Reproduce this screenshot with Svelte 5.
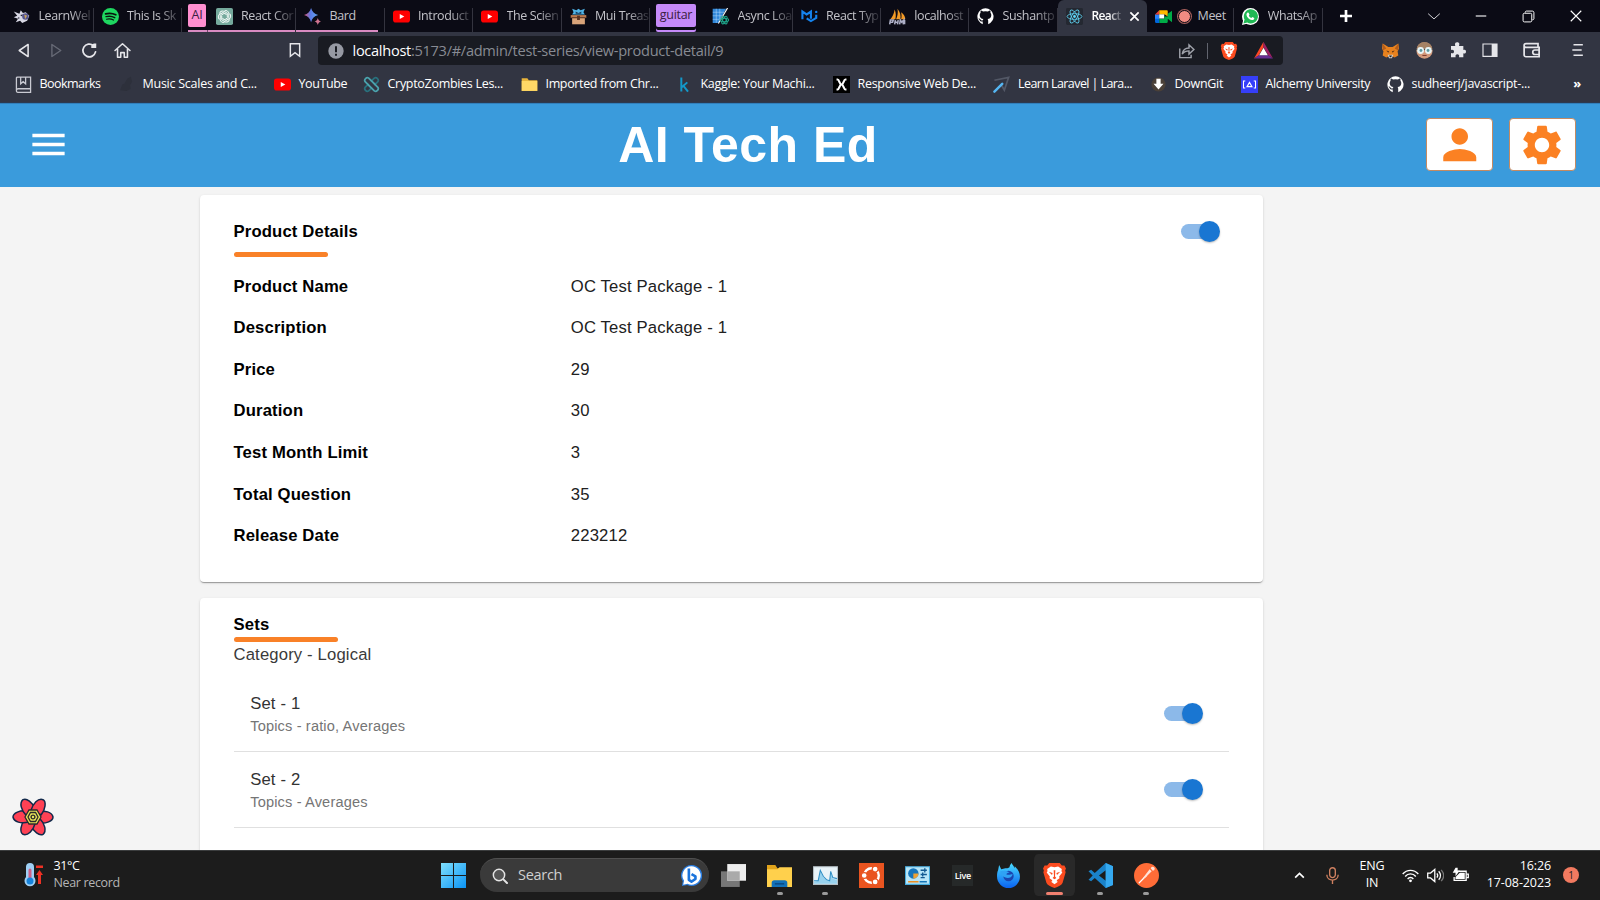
<script>
  const cat = '<path fill="#fff" fill-rule="evenodd" d="M12 .5a11.5 11.5 0 0 0-3.9 22.3V19c-3 .6-4-1-4.600-2.200C3 15.600 2.500 15.600 2 15c1.500-.6 2.500.6 3.200 1.700.8 1.300 2 1 3 .6.1-.8.500-1.300.9-1.600-3-.4-5.300-1.700-5.300-5.700 0-1.300.500-2.500 1.300-3.300-.2-.9-.2-2 .2-3 1 0 2.200.6 3.200 1.300a11 11 0 0 1 7 0c1-.7 2.200-1.300 3.200-1.300.4 1 .4 2.100.2 3 .8.8 1.300 2 1.300 3.300 0 4-2.300 5.300-5.300 5.700.6.500.9 1.300.9 2.500v4.600A11.500 11.500 0 0 0 12 .5z"/>';
  const lion = '<path fill="#fb4b1f" d="M12 0h5l2 2.500 2.500-.2 1.500 3-.8 2 .5 1.500-3 10.500c-.8 2-4 3.500-7.700 4.700C8.300 22.800 5.100 21.300 4.300 19.300L1.300 8.800l.5-1.500-.8-2 1.500-3 2.500.2L7 0z"/><path fill="#fff" d="M12 4l3.500-.7 3.500 2.400-.3 2.100.8 1.200-3 3.900.3 1.800-2.400 1.500-.3 1.200 1.200.7L12 20.500l-3.300-2.400 1.200-.7-.3-1.200-2.400-1.500.3-1.800-3-3.900.8-1.200L5 5.700l3.500-2.400z"/><path fill="#fb4b1f" d="M6.500 8.500l3.700 1-.6 2zM17.500 8.500l-3.700 1 .6 2zM11.200 7h1.600l-.3 6 1.300 1.300L12 15.500l-1.800-1.200 1.300-1.300z"/>';
  const yt = '<rect y="3.500" width="24" height="17" rx="4" fill="#f00"/><path fill="#fff" d="M9.500 8.300l6.500 3.700-6.500 3.700z"/>';
  const art = {
    bee: '<path fill="#d8d8e4" d="M1 5l8 3 2-5 3 4 4-1 5 5-3 7-7 3-3-3-6 2 3-5-6-2 5-2z"/><path fill="#17162b" d="M10 10l4-1-1 3zM7 13l3 1-3 1z"/><circle cx="17.500" cy="12" r="4.500" fill="#55558f"/><path fill="#caa45e" d="M16 9l4 2-3 5z"/>',
    spotify: '<circle cx="12" cy="12" r="12" fill="#1ed760"/><g fill="none" stroke="#08150c" stroke-linecap="round"><path stroke-width="2.400" d="M5 8.300c5-1.400 10-1 14.500 1.400"/><path stroke-width="2" d="M5.700 12.200c4.400-1.200 8.600-.7 12.300 1.400"/><path stroke-width="1.600" d="M6.300 15.800c3.700-.9 7-.5 10 1.200"/></g>',
    gpt: '<rect width="24" height="24" rx="2.500" fill="#75a99c"/><g fill="none" stroke="#f4faf8" stroke-width="1.400"><path d="M12 4a4.200 4.200 0 0 1 6 4v5l-5 3"/><path d="M12 4a4.200 4.200 0 0 1 6 4v5l-5 3" transform="rotate(60 12 12)"/><path d="M12 4a4.200 4.200 0 0 1 6 4v5l-5 3" transform="rotate(120 12 12)"/><path d="M12 4a4.200 4.200 0 0 1 6 4v5l-5 3" transform="rotate(180 12 12)"/><path d="M12 4a4.200 4.200 0 0 1 6 4v5l-5 3" transform="rotate(240 12 12)"/><path d="M12 4a4.200 4.200 0 0 1 6 4v5l-5 3" transform="rotate(300 12 12)"/></g>',
    bard: '<defs><linearGradient id="bd"><stop stop-color="#e05573"/><stop offset=".45" stop-color="#5c7be6"/><stop offset="1" stop-color="#62a5f0"/></linearGradient></defs><path fill="url(#bd)" d="M10 0c1.500 5.500 4.500 8.500 10 10-5.500 1.500-8.500 4.500-10 10-1.500-5.500-4.500-8.500-10-10C5.500 8.500 8.500 5.500 10 0z"/><path fill="#cf7390" d="M19.500 14c.7 2.700 1.800 4 4.500 5-2.700.7-3.800 2.300-4.500 5-.7-2.700-1.800-4.300-4.500-5 2.700-1 3.800-2.300 4.500-5z"/>',
    yt,
    chest: '<path fill="#4fb3e6" d="M3 1l6 2 3-2 3 2 6-2-2 5 2 3H3l2-3z"/><path fill="#173a5c" d="M8 5l4 2 4-2v3H8z"/><path fill="#b97a50" d="M1 10h22v4H1z"/><path fill="#d9a47a" d="M3 14h18v9H3z"/><path fill="#5a3422" d="M10 11h4v6h-4zM2 13h20v1.500H2z"/>',
    async: '<path fill="#3187d8" d="M1 1h19L9 21H1z"/><path stroke="#b8dcff" stroke-width=".7" d="M1 6h16M1 11h13M1 16h10M6 1v20M11 1v15"/><path stroke="#fff" stroke-width="1.600" d="M22 0L9 22"/><g fill="none" stroke="#1fa58a" stroke-width="1.500"><ellipse cx="17.500" cy="17" rx="6" ry="2.500"/><ellipse cx="17.500" cy="17" rx="6" ry="2.500" transform="rotate(60 17.500 17)"/><ellipse cx="17.500" cy="17" rx="6" ry="2.500" transform="rotate(120 17.500 17)"/></g>',
    mui: '<path fill="none" stroke="#1583ee" stroke-width="3" d="M2 16V5l6 4 6-4v10M8 14.500l6 4 7.500-4.500V9.500"/><circle cx="21.500" cy="5.500" r="1.700" fill="#1583ee"/>',
    pma: '<path fill="#f39a25" d="M2 16C5 12 7 8 8 2c2 5 2 9 1 14zM10 16c2-4 3-9 2-15 4 5 5 10 4 15zM17 16c1-3 1-7 0-10 4 3 6 6 6 10z"/><path stroke="#adafc6" stroke-width="2.200" fill="none" d="M1 23l1-6h4l-1 3H2M8 23l1-6M8.500 20h4M13 17l-1 6M15 23l1-6 2 3 3-3-1 6M22 17v6"/>',
    cat,
    react: '<rect width="24" height="24" rx="2" fill="#242831"/><g fill="none" stroke="#61dafb" stroke-width="1.100"><ellipse cx="12" cy="12" rx="10.500" ry="4"/><ellipse cx="12" cy="12" rx="10.500" ry="4" transform="rotate(60 12 12)"/><ellipse cx="12" cy="12" rx="10.500" ry="4" transform="rotate(120 12 12)"/></g><circle cx="12" cy="12" r="2" fill="#61dafb"/>',
    meet: '<path fill="#2684fc" d="M0 9h6v8H0z"/><path fill="#ea4335" d="M0 9l6-6v6z"/><path fill="#ffba00" d="M6 3h10.500c1 0 1.500.6 1.500 1.500V12l-4-3H6z"/><path fill="#fff" d="M6 9h7v6H6z"/><path fill="#00ac47" d="M6 15h7v-3h5v7.500c0 .9-.6 1.500-1.500 1.500H6zM18 8l6-4v16l-6-5z"/><path fill="#0066da" d="M0 15h6v6H1.500C.6 21 0 20.400 0 19.500z"/>',
    whats: '<circle cx="12" cy="12" r="12" fill="#fff"/><path fill="#fff" d="M0 24l2-8 6 6z"/><path fill="#20b954" d="M2 22l1.600-5.600A10 10 0 1 1 7.500 20.500z"/><path fill="#fff" d="M8.200 6.500l1.200.1 1.200 2.800-1 1.400c.8 1.600 2 2.600 3.600 3.400l1.400-1.500 2.700 1.300c.3 2-1.500 3.200-3.300 3-4-.6-7-3.800-7.700-7.200-.2-1.400.8-3 1.900-3.300z"/>',
    book: '<g fill="none" stroke="#c9cad2" stroke-width="1.800"><path d="M2 20V3c0-1 .6-1.500 1.500-1.500H22V23H4c-1.300 0-2-1-2-2.500S3 18 4.500 18H22M8 2v9l3.500-3L15 11V2"/></g>',
    dark: '<path fill="#2d303b" d="M3 20l3-8 3-1 4-7 5-3 2 7-3 5 1 5-6 3z"/>',
    crypto: '<g fill="none" stroke-width="2.500" stroke-linejoin="round" stroke-linecap="round"><path stroke="#29717d" d="M12 7l4-4c3-2 7 2 5 5l-4 4M12 17l-4 4c-3 2-7-2-5-5l4-4"/><path stroke="#4ba3ad" d="M3 8C1 5 5 1 8 3l13 13c2 3-2 7-5 5zM7 12l5 5M12 7l5 5"/></g>',
    folder: '<path fill="#e8b43b" d="M1 3h8l2 3h12v15H1z"/><path fill="#ffd866" d="M1 7h22v14H1z"/>',
    kaggle: '<path fill="none" stroke="#1398c9" stroke-width="2.800" d="M7.500 2v20M16 9l-8 7M10.500 14L17 22"/>',
    xbox: '<path d="M0 0h24v24H0z"/><path fill="none" stroke="#fff" stroke-width="3" d="M5 5h1.500c2.500 0 2.500 7 5.500 7s3-7 5.500-7H19M5 19h1.500c2.500 0 2.500-7 5.500-7s3 7 5.500 7H19"/>',
    plane: '<path fill="none" stroke="#535866" stroke-width="2.500" d="M2 6L22 2l-6 18-4-7"/><path stroke="#55b6f2" stroke-width="3.500" stroke-linecap="round" d="M2 22L13 11"/>',
    down: '<circle cx="12" cy="12" r="10" fill="#4a4038"/><path fill="#fff" d="M9 4h6v7h4l-7 8-7-8h4z"/>',
    alch: '<path fill="#363ff9" d="M0 0h24v24H0z"/><path fill="none" stroke="#fff" stroke-width="1.500" d="M6 7H3.500v10H6M18 7h2.500v10H18M8.500 15l3.500-6 3.500 6z"/>',
    back: '<path fill="none" stroke="#e6e6ea" stroke-width="2.200" stroke-linejoin="round" d="M18.500 3.500v17L6 12z"/>',
    fwd: '<path fill="none" stroke="#666975" stroke-width="2" stroke-linejoin="round" d="M5.500 3.500v17L18 12z"/>',
    reload: '<path fill="none" stroke="#e6e6ea" stroke-width="2.500" stroke-linecap="round" d="M17.500 5A9 9 0 1 0 20.500 14"/><path fill="#e6e6ea" d="M14.500 8.500V5L18 2h3.500v6.500z"/>',
    home: '<path fill="none" stroke="#e6e6ea" stroke-width="2.200" stroke-linejoin="round" stroke-linecap="round" d="M1.500 12L12 2.500 22.500 12M5 10v11.500h4.500V15h5v6.500H19V10"/>',
    mark: '<path fill="none" stroke="#e6e6ea" stroke-width="2.200" d="M5 2.500h14v19l-7-5.500-7 5.500z"/>',
    info: '<circle cx="12" cy="12" r="11.500" fill="#9699a3"/><path fill="#191b22" d="M10.500 5h3v9h-3zM10.500 16h3v3h-3z"/>',
    share: '<path fill="none" stroke="#a0a3ab" stroke-width="2" d="M2.500 9v13h16v-4M6 17c1-6 5-8.500 9.500-8.500V4l7 6.500-7 6.500v-4.500c-4 0-7 1-9.500 4.500z"/>',
    lion,
    bat: '<path fill="#ff4724" d="M12 1v7L6 18l-6 4z"/><path fill="#9e1f63" d="M12 1l12 21-6-4-6-10z"/><path fill="#662d91" d="M0 22l6-4h12l6 4z"/><path fill="#fff" d="M12 8.500l5.500 9.500h-11z"/>',
    fox: '<path fill="#e8821e" d="M1 2l8 5h6l8-5 1 7-2 4 1 6-5 3-4-2h-4l-4 2-5-3 1-6-2-4z"/><path fill="#b35d1c" d="M1 2l5 7-5 3zM23 2l-5 7 5 3z"/><path fill="#5b3318" d="M6 12l4 1-1 2zM18 12l-4 1 1 2z"/><path fill="#d8d0c8" d="M8 18h8l-2 5h-4z"/><path fill="#222" d="M10 19h4l-1 2.500h-2z"/>',
    face: '<circle cx="12" cy="12" r="11.500" fill="#d39a7c"/><path fill="#a58265" d="M1 9C3 1 9 0 12 .5 17 0 22 3 23 9z"/><path fill="#55504c" d="M0 9.500h24v2H0z"/><circle cx="6.500" cy="12" r="4.800" fill="#e8f5f6"/><circle cx="17.500" cy="12" r="4.800" fill="#e8f5f6"/><circle cx="7" cy="12" r="2" fill="#5b98a0"/><circle cx="17" cy="12" r="2" fill="#5b98a0"/><path stroke="#843f31" stroke-width="1.500" d="M9 19h6"/>',
    puzzle: '<path fill="#e6e6ea" d="M1.500 6H8C6.500 1.500 9 .5 11 .5S15 2 13.500 6H20v6c3-1.200 4 .5 4 2.500s-1.500 3.500-4 2.500v6h-6.500c1-3.500-.5-4.500-2.500-4.500S7.500 20 8.500 23h-7v-6.500C5 17.500 6 16 6 14.500S5 11 1.500 12z"/>',
    side: '<path fill="none" stroke="#e6e6ea" stroke-width="1.700" d="M1.500 3h21v18.500h-21z"/><path fill="#e6e6ea" d="M14.500 3h8v18.500h-8z"/>',
    wallet: '<path fill="none" stroke="#e6e6ea" stroke-width="2.300" d="M20 8V3.500H4a2.500 2.500 0 0 0 0 5h17.500V21H4c-1.500 0-2.500-1-2.500-2.500V6M22 12h-6a3 3 0 0 0 0 6h6"/>',
    menu: '<path stroke="#e6e6ea" stroke-width="2.600" d="M6 3h16M4 12h16M6 21h16"/>',
    chev: '<path fill="none" stroke="#d5d5d9" stroke-width="1.700" d="M2 8l10 9 10-9"/>',
    min: '<path stroke="#fff" stroke-width="2.200" d="M1.500 12h21"/>',
    max: '<path fill="none" stroke="#fff" stroke-width="1.800" d="M6 5V4c0-1 1-2 2-2h11c2 0 3 1 3 3v11c0 1-1 2-2 2h-1"/><rect x="2" y="6" width="16" height="16" rx="2.500" fill="none" stroke="#fff" stroke-width="1.800"/>',
    close: '<path stroke="#fff" stroke-width="1.900" d="M3 3l18 18M21 3L3 21"/>',
    plus: '<path stroke="#fff" stroke-width="4" d="M12 3v18M3 12h18"/>',
    xx: '<path stroke="#fff" stroke-width="3.800" d="M3 3l18 18M21 3L3 21"/>',
    person: '<path fill="#fb8123" d="M12 12c2.210 0 4-1.790 4-4s-1.790-4-4-4-4 1.790-4 4 1.790 4 4 4zm0 2c-2.670 0-8 1.340-8 4v2h16v-2c0-2.660-5.330-4-8-4z"/>',
    gear: '<path fill="#fb8123" d="M19.140 12.940c.04-.3.06-.61.06-.94 0-.32-.02-.64-.07-.94l2.030-1.580c.18-.14.23-.41.12-.61l-1.920-3.320c-.12-.22-.37-.29-.59-.22l-2.390.96c-.5-.38-1.030-.7-1.620-.94l-.36-2.540c-.04-.24-.24-.41-.48-.41h-3.840c-.24 0-.43.17-.47.41l-.36 2.540c-.59.24-1.130.57-1.620.94l-2.390-.96c-.22-.08-.47 0-.59.22L2.740 8.870c-.12.21-.08.47.12.61l2.030 1.580c-.05.3-.09.63-.09.94s.02.64.07.94l-2.030 1.580c-.18.14-.23.41-.12.61l1.920 3.320c.12.22.37.29.59.22l2.390-.96c.5.38 1.030.7 1.620.94l.36 2.540c.05.24.24.41.48.41h3.840c.24 0 .44-.17.47-.41l.36-2.540c.59-.24 1.130-.56 1.620-.94l2.390.96c.22.08.47 0 .59-.22l1.920-3.320c.12-.22.07-.47-.12-.61l-2.010-1.580zM12 15.600c-1.980 0-3.600-1.620-3.600-3.600s1.620-3.600 3.600-3.600 3.600 1.620 3.600 3.600-1.620 3.600-3.600 3.600z"/>',
    burger: '<path fill="#fff" d="M3 18h18v-2H3v2zm0-5h18v-2H3v2zm0-7v2h18V6H3z"/>',
    temp: '<path fill="#9fd0f5" d="M4 4a4 4 0 0 1 8 0v10a5.500 5.500 0 1 1-8 0z"/><path stroke="#cf5f86" stroke-width="3" stroke-linecap="round" d="M8 7v10"/><circle cx="8" cy="18" r="3.500" fill="#1683dc"/><path fill="#ee3124" d="M14 2.500h7V5h-7zM17.500 7l3.500 5h-2v9h-3v-9h-2z"/>',
    win: '<defs><linearGradient id="wn" x2="1" y2="1"><stop stop-color="#7fe0fd"/><stop offset="1" stop-color="#0a93f5"/></linearGradient></defs><path fill="url(#wn)" d="M0 0h11.500v11.500H0zM12.500 0H24v11.500H12.500zM0 12.500h11.500V24H0zM12.500 12.500H24V24H12.500z"/>',
    glass: '<circle cx="10.500" cy="10.500" r="8.500" fill="#555" stroke="#e4e4e4" stroke-width="2.200"/><path stroke="#e4e4e4" stroke-width="3" stroke-linecap="round" d="M17 17l5.500 5.500"/>',
    bing: '<path fill="#2a7de0" d="M12 0a12 12 0 1 1-5 22.800L1 24l1-5.500A12 12 0 0 1 12 0z"/><path fill="#fff" d="M12 1.500a10.500 10.500 0 1 1-4.500 20L2.500 22.500l1-4.500A10.500 10.500 0 0 1 12 1.500z"/><path fill="none" stroke="#1b74dc" stroke-width="3" stroke-linejoin="round" d="M9 4v13l3 2 4.500-3v-3L12 10.500"/>',
    views: '<path fill="#777" d="M0 8h18v15H0z"/><path fill="#eee" d="M6 1h18v16H6z"/><path fill="#aaa" d="M6 8h12v9H6z"/>',
    files: '<path fill="#e0a31b" d="M0 2h8l2 3h14v6H0z"/><path fill="#ffd04c" d="M0 6h10l2-2h12v19H0z"/><path fill="#1271b9" d="M4.500 23v-4c0-1.500 1-2.500 2.500-2.500h10c1.500 0 2.500 1 2.500 2.500v4z"/><path stroke="#0a4c86" stroke-width="1.500" d="M7.500 20h9"/>',
    perf: '<path fill="#e9f3f8" stroke="#b5bfc5" d="M.5 3.500h23v17H.5z"/><path fill="#98d2ee" d="M1 18l4-1 2-9 3 6 3 2 3 1 1-8 2 6 4 1v4H1z"/><path fill="none" stroke="#2f8fc6" d="M1 17h4l2-10 3 6 3 3 3 1 1-9 2 6 4 1"/>',
    ubuntu: '<path fill="#e95420" d="M0 0h24v24H0z"/><circle cx="12" cy="12" r="7" fill="none" stroke="#fff" stroke-width="2.300"/><g fill="#fff" stroke="#e95420" stroke-width="1.100"><circle cx="5" cy="12" r="2.800"/><circle cx="15.500" cy="5.800" r="2.800"/><circle cx="15.500" cy="18.200" r="2.800"/></g>',
    panel: '<path fill="#b9e6f8" stroke="#46abdd" d="M.5 3.500h23v17H.5z"/><circle cx="8" cy="10" r="5" fill="#1576bd"/><path fill="#eda234" d="M8 10h5a5 5 0 0 1-5 5z"/><path stroke="#125a92" stroke-width="1.300" d="M15 7h6M15 11h6M15 14h4M19 5v4M17 9v4"/><path stroke="#e98f24" stroke-width="1.500" d="M3 18h10"/><path stroke="#1475b8" stroke-width="1.500" d="M14 18h7"/>',
    firefox: '<defs><linearGradient id="ff" x2="0" y2="1"><stop stop-color="#49dbff"/><stop offset="1" stop-color="#0a62f0"/></linearGradient></defs><path fill="url(#ff)" d="M2 7l1-5 2 4 4-1c1 0 3 0 4-1 0-1 1-3 2-4 1 2 2 3 3 5V3c3 3 5 6 5 10a11 11 0 0 1-22 0c0-2 0-4 1-6z"/><circle cx="12" cy="12.500" r="5" fill="#1a45b0"/><path fill="#2fa2f4" d="M4 8c3-1 6-1 9 1-2 0-3 1-3 2 3 1 5-.5 6 0-1 3-4 4-7 3s-5-3-5-6z"/>',
    vsc: '<path fill="#1a82c9" d="M17 0l7 3v18l-7 3L6.500 14.500 3 17.500.500 16l4-4-4-4L3 6.500l3.500 3zM17 7l-6.500 5 6.500 5z" fill-rule="evenodd"/><path fill="#35a9f0" d="M17 0l7 3v18l-7 3z"/>',
    post: '<circle cx="12" cy="12" r="12" fill="#ff6c37"/><path stroke="#fff" stroke-width="1.200" stroke-linecap="round" d="M5 19l7-7"/><path fill="#ffe3d8" d="M8 15l7-9 2 2-6 6zM16 5a2 2 0 1 1 2 2.500z"/>',
    up: '<path fill="none" stroke="#fff" stroke-width="3" d="M4 16l8-8 8 8"/>',
    mic: '<g fill="none" stroke="#cf8060" stroke-width="1.900"><rect x="8" y="1" width="8" height="14" rx="4"/><path d="M4 11c0 10 16 10 16 0M12 18.500V24"/></g>',
    wifi: '<g fill="none" stroke="#fff" stroke-width="2"><path d="M1 10c6-7 16-7 22 0M4.500 13.500c4-5 11-5 15 0M8 17c2-3 6-3 8 0"/></g><circle cx="12" cy="19.500" r="2" fill="#fff"/>',
    vol: '<g fill="none" stroke="#fff" stroke-width="1.800"><path d="M1 8.500h4l6-5v17l-6-5H1zM14 9c1.500 2 1.500 4 0 6M16.500 6c3.500 4 3.500 8 0 12"/><path stroke="#777" d="M20 4c4.500 5 4.500 11 0 16"/></g>',
    batt: '<path fill="none" stroke="#fff" stroke-width="1.800" d="M9 6h11v13H3v-5M21 10h2v5h-2"/><path fill="#fff" d="M11 8h7v9H5v-3zM5 1h3v4h3l-6 8V8H1z"/>'
  };
  const tabs = [
    ['bee', 'LearnWel', 88.500], ['spotify', 'This Is Sk', 88.500], ['@', 'AI', 25.500], ['gpt', 'React Cor', 88.500], ['bard', 'Bard', 88.500],
    ['yt', 'Introduct', 88.500], ['yt', 'The Scien', 88.500], ['chest', 'Mui Treas', 88.500], ['@', 'guitar', 54], ['async', 'Async Loa', 88.500],
    ['mui', 'React Typ', 88.300], ['pma', 'localhost', 88.300], ['cat', 'Sushantp', 88.800], ['react', 'React', 88.700], ['meet', 'Meet', 87.700], ['whats', 'WhatsAp', 88.300]
  ];
  const marks = [
    ['book', 'Bookmarks', 103, -0.55], ['dark', 'Music Scales and C...', 156, -0.25], ['yt', 'YouTube', 89, -0.4], ['crypto', 'CryptoZombies Les...', 158, -0.3],
    ['folder', 'Imported from Chr...', 155, -0.35], ['kaggle', 'Kaggle: Your Machi...', 157, -0.3], ['xbox', 'Responsive Web De...', 160.500, -0.3], ['plane', 'Learn Laravel | Lara...', 156.500, -0.58],
    ['down', 'DownGit', 91, -0.3], ['alch', 'Alchemy University', 146, -0.35], ['cat', 'sudheerj/javascript-...', 180, -0.3]
  ];
  const details = [
    ['Product Name', 'OC Test Package - 1'], ['Description', 'OC Test Package - 1'], ['Price', '29'], ['Duration', '30'],
    ['Test Month Limit', '3'], ['Total Question', '35'], ['Release Date', '223212']
  ];
  const sets = [['Set - 1', 'Topics - ratio, Averages'], ['Set - 2', 'Topics - Averages']];
  const apps = [
    ['views', ''], ['files', 'dot'], ['perf', 'dot'], ['ubuntu', ''], ['panel', ''], ['live', ''],
    ['firefox', ''], ['lion', 'on'], ['vsc', 'dot'], ['post', 'dot']
  ];
</script>

{#snippet icon(name, size)}
  <svg class="icon" width={size} height={size} viewBox="0 0 24 24">{@html art[name]}</svg>
{/snippet}

<div class="screen">
  <header class="tabs">
    {#each tabs as [name, label, w], i}
      {#if name === '@'}
        <div class="group {label}" style="width:{w}px"><span>{label}</span></div>
      {:else}
        <div class="tab" class:active={name === 'react'} class:pink={i === 3} class:last={i === 4} class:plain={name === 'bard' || name === 'meet'} style="width:{w}px">
          {@render icon(name, 17)}
          {#if name === 'meet'}<i class="rec"></i>{/if}
          <span class="label">{label}</span>
          {#if name === 'react'}{@render icon('xx', 11)}{/if}
        </div>
      {/if}
    {/each}
    <div class="plus">{@render icon('plus', 16)}</div>
    <div class="wins">
      {@render icon('chev', 14)}{@render icon('min', 12)}{@render icon('max', 13)}{@render icon('close', 14)}
    </div>
  </header>

  <nav class="toolbar">
    <div class="nav">{@render icon('back', 17)}{@render icon('fwd', 17)}{@render icon('reload', 17)}{@render icon('home', 17)}</div>
    <div class="save">{@render icon('mark', 16)}</div>
    <div class="address">
      {@render icon('info', 16)}
      <p><b>localhost</b>:5173/#/admin/test-series/view-product-detail/9</p>
      {@render icon('share', 17)}<i></i>{@render icon('lion', 18)}{@render icon('bat', 19)}
    </div>
    <div class="ext">
      {@render icon('fox', 17)}{@render icon('face', 17)}{@render icon('puzzle', 16)}{@render icon('side', 16)}{@render icon('wallet', 18)}{@render icon('menu', 14)}
    </div>
  </nav>

  <div class="marks">
    {#each marks as [name, label, w, track]}
      <div class="mark" style="width:{w}px;letter-spacing:{track}px">{@render icon(name, 17)}<span>{label}</span></div>
    {/each}
    <b>»</b>
  </div>

  <div class="appbar">
    <div class="burger">{@render icon('burger', 43)}</div>
    <h1>AI Tech Ed</h1>
    <div class="actions">
      <button aria-label="Profile">{@render icon('person', 49.500)}</button>
      <button aria-label="Settings">{@render icon('gear', 48)}</button>
    </div>
  </div>

  <main>
    <section class="card first">
      <div class="head"><h2>Product Details</h2><div class="switch"></div></div>
      <div class="bar"></div>
      <dl>
        {#each details as [k, v]}<dt>{k}</dt><dd>{v}</dd>{/each}
      </dl>
    </section>
    <section class="card second">
      <h2>Sets</h2>
      <div class="bar long"></div>
      <p class="category">Category - Logical</p>
      {#each sets as [name, topics]}
        <div class="set">
          <div><p>{name}</p><small>{topics}</small></div>
          <div class="switch"></div>
        </div>
      {/each}
    </section>
    <svg class="flower" viewBox="-21 -21 42 42" width="42" height="42">
      {#each [0, 60, 120, 180, 240, 300] as a}
        <path transform="rotate({a})" d="M6 6C13 7 20 4 20 0C19-5 12-7 4-5Z" fill="#ff4154" stroke="#12294a" stroke-width="1.500" />
      {/each}
      <path d="M-4-7H4L8 0L4 7H-4L-8 0Z" fill="#e8e35a" stroke="#2b2a2a" stroke-width="1.300" />
      <path d="M-2.500-4.500H2.500L5 0L2.500 4.500H-2.500L-5 0Z" fill="none" stroke="#2b2a2a" stroke-width="1.300" />
      <circle r="1.900" fill="none" stroke="#2b2a2a" stroke-width="1.400" />
    </svg>
  </main>

  <footer>
    <div class="weather">{@render icon('temp', 24)}<p>31°C<br /><span>Near record</span></p></div>
    <div class="start">{@render icon('win', 25)}</div>
    <div class="search">{@render icon('glass', 16)}<span>Search</span>{@render icon('bing', 21)}</div>
    <div class="apps">
      {#each apps as [name, state]}
        <div class="app {state}">
          {#if name === 'live'}<span class="live">Live</span>{:else}{@render icon(name, 25)}{/if}
        </div>
      {/each}
    </div>
    <div class="tray">
      {@render icon('up', 13)}{@render icon('mic', 17)}
      <p class="lang">ENG<br />IN</p>
      {@render icon('wifi', 17)}{@render icon('vol', 17)}{@render icon('batt', 17)}
      <p class="clock">16:26<br />17-08-2023</p>
      <span class="badge">1</span>
    </div>
  </footer>
</div>

<style>
  :global(body) { overflow: hidden; }
  * { box-sizing: border-box; }
  p, h1, h2, dl, dd { margin: 0; }
  .icon { display: block; flex: none; }
  .screen { width: 1600px; height: 900px; display: flex; flex-direction: column; overflow: hidden; font-family: 'Open Sans', sans-serif; font-size: 12.5px; letter-spacing: -0.25px; color: #fff; white-space: nowrap; }

  .tabs { height: 32px; flex: none; display: flex; background: #0b0b15; padding-left: 5px; }
  .tab { flex: none; display: flex; align-items: center; gap: 8.5px; padding: 0 2px 0 8px; position: relative; color: #c2c2c8; letter-spacing: -0.4px; }
  .tab::after { content: ''; position: absolute; right: 0; top: 8px; bottom: 0; width: 1px; background: #34343f; }
  .tab.active::after { display: none; }
  .label { flex: 1; margin-top: -1px; mask-image: linear-gradient(90deg, #000 60%, #0003 98%); }
  .tab.pink { background: linear-gradient(#d98bc2, #d98bc2) left bottom / 100% 2px no-repeat; }
  .tab.last { background: linear-gradient(#d98bc2, #d98bc2) left bottom / 82px 2px no-repeat; }
  .tab.plain .label { mask-image: none; }
  .tab.active { background: #323542; border-radius: 6px 6px 0 0; color: #fff; font-weight: 600; font-size: 12px; letter-spacing: -0.6px; padding-right: 8px; }
  .rec { width: 13px; height: 13px; border-radius: 50%; background: #f28b82; border: 1px solid #0b0b15; box-shadow: 0 0 0 1px #a75f5b; margin: 0 -2px; flex: none; }
  .group { flex: none; padding: 4px 0 0 6px; color: #3a2142; letter-spacing: -0.3px; }
  .group span { display: block; height: 23px; line-height: 22px; text-align: center; border-radius: 2px; background: #ff8fd0; width: 18px; }
  .group.AI { background: linear-gradient(#d98bc2, #d98bc2) right bottom / 19.5px 2px no-repeat; }
  .group.guitar span { background: #c58af9; width: 40px; box-shadow: 0 3px #0b0b15, 0 5px #c58af9; }
  .plus { padding: 8px 0 0 15px; }
  .wins { display: flex; align-items: center; gap: 34.500px; margin-left: auto; padding-right: 17px; }

  .toolbar { height: 36px; flex: none; background: #323542; display: flex; align-items: center; }
  .nav { display: flex; gap: 16.200px; padding-left: 14.500px; width: 287px; }
  .save { width: 30.500px; }
  .address { width: 965px; height: 29px; border-radius: 4px; background: #191b22; display: flex; align-items: center; padding: 0 10px 0 10.500px; margin-top: 1px; }
  .address p { flex: 1; padding-left: 8.500px; margin-top: -2px; font-size: 14.600px; letter-spacing: -0.3px; color: #888b93; }
  .address b { font-weight: 400; color: #fff; }
  .address i { width: 1px; height: 16px; background: #62656f; margin: 0 12px; }
  .address .icon:last-child { margin-left: 16px; }
  .ext { display: flex; align-items: center; gap: 16.800px; margin-left: auto; padding-right: 16px; }
  .ext .icon:nth-child(5) { margin-left: 8px; }
  .ext .icon:nth-child(6) { margin-left: 12px; }

  .marks { height: 35px; flex: none; background: #323542; display: flex; align-items: center; padding: 0 19px 2px 14.500px; border-bottom: 1px solid #2c3a50; }
  .mark { flex: none; display: flex; align-items: center; gap: 8px; }
  .mark span { margin-top: -1px; }
  .marks b { margin-left: auto; margin-top: -3px; font-size: 13px; }

  .appbar { height: 83.500px; flex: none; background: #3a9bdc; display: flex; align-items: center; justify-content: space-between; padding: 0 24px 1px 27px; font-family: 'Liberation Sans', sans-serif; border-top: 1px solid #3280bb; }
  .burger { width: 145px; }
  h1 { font-size: 50px; line-height: 1; letter-spacing: 0.500px; margin-left: -102px; }
  .actions { display: flex; gap: 16px; }
  button { width: 67px; height: 53px; padding: 0; display: flex; align-items: center; justify-content: center; background: #fff; border: 1px solid #c48a62; border-radius: 4px; }

  main { flex: 1; min-height: 0; overflow: hidden; background: #f4f4f4; padding: 8.500px 0 0 200px; position: relative; font-family: 'Liberation Sans', sans-serif; font-size: 16.670px; letter-spacing: 0.156px; line-height: 25px; color: #212121; }
  .card { width: 1063px; background: #fff; border-radius: 4px; padding: 0 34px 0 33.500px; box-shadow: 0 2px 1px -1px #0003, 0 1px 1px #00000024, 0 1px 3px #0000001f; }
  .first { height: 387px; padding-top: 23.500px; margin-bottom: 16px; }
  .head { display: flex; justify-content: space-between; align-items: center; padding-right: 12px; }
  h2 { font-size: 16.670px; line-height: 25px; color: #000; }
  .bar { width: 94px; height: 5px; border-radius: 3px; background: #f98128; margin-top: 8px; }
  .bar.long { width: 104px; margin: 0; }
  dl { display: grid; grid-template-columns: 337.300px 1fr; row-gap: 16.670px; margin-top: 17px; }
  dt { font-weight: 700; color: #000; }
  .second { height: 270px; padding-top: 14px; }
  .category { line-height: 25px; color: #3a3a3a; margin-bottom: 9.500px; }
  .set { height: 75.800px; border-bottom: 1px solid #e0e0e0; display: flex; justify-content: space-between; align-items: center; padding: 0 29px 0 16.700px; color: #333; }
  .set small { display: block; font-size: 14.580px; line-height: 21px; color: #757575; }
  .switch { width: 36px; height: 15px; border-radius: 8px; background: #8cb9e9; display: flex; align-items: center; justify-content: flex-end; }
  .switch::after { content: ''; width: 21px; height: 21px; flex: none; margin-right: -3px; border-radius: 50%; background: #1976d2; box-shadow: 0 1px 2px #0004; }
  .flower { position: absolute; left: 12px; bottom: 12px; }

  footer { height: 50px; flex: none; background: #1c1c1c; border-top: 1px solid #3b3d3e; display: flex; align-items: center; line-height: 16.700px; letter-spacing: -0.1px; padding-bottom: 1px; }
  .weather { width: 441px; padding-left: 22px; display: flex; align-items: center; gap: 7.500px; letter-spacing: -0.35px; }
  .weather span { color: #b5b5b5; }
  .start { width: 39px; }
  .search { width: 229px; height: 34px; border-radius: 17px; background: #3a3a3a; border-top: 1px solid #505050; display: flex; align-items: center; padding: 0 7px 0 12px; font-size: 14.500px; color: #d0d0d0; }
  .search span { flex: 1; padding-left: 10px; letter-spacing: -0.3px; }
  .apps { display: flex; padding-left: 2px; }
  .app { width: 45.800px; height: 42px; display: flex; align-items: center; justify-content: center; position: relative; }
  .app.on { background: #292929; background-clip: content-box; padding: 0 2px; border-radius: 6px; }
  .dot::after, .on::after { content: ''; position: absolute; bottom: 1.500px; width: 6px; height: 3px; border-radius: 2px; background: #9a9a9a; }
  .on::after { width: 17px; background: #f08070; }
  .live { width: 21px; height: 21px; background: #262929; font: 600 9px/21px 'Open Sans', sans-serif; text-align: center; letter-spacing: -0.3px; }
  .tray { margin-left: auto; display: flex; align-items: center; padding-right: 21px; }
  .lang { width: 30px; text-align: center; margin: 0 15px 0 16px; }
  .tray .icon:nth-child(2) { margin-left: 18px; }
  .tray .icon:nth-child(5) { margin-left: 7.500px; }
  .tray .icon:nth-child(6) { margin-left: 8.500px; }
  .clock { width: 82px; text-align: right; }
  .badge { width: 16px; height: 16px; border-radius: 50%; background: #f27a60; color: #222; font-size: 10px; line-height: 16px; text-align: center; margin-left: 12px; }
</style>
